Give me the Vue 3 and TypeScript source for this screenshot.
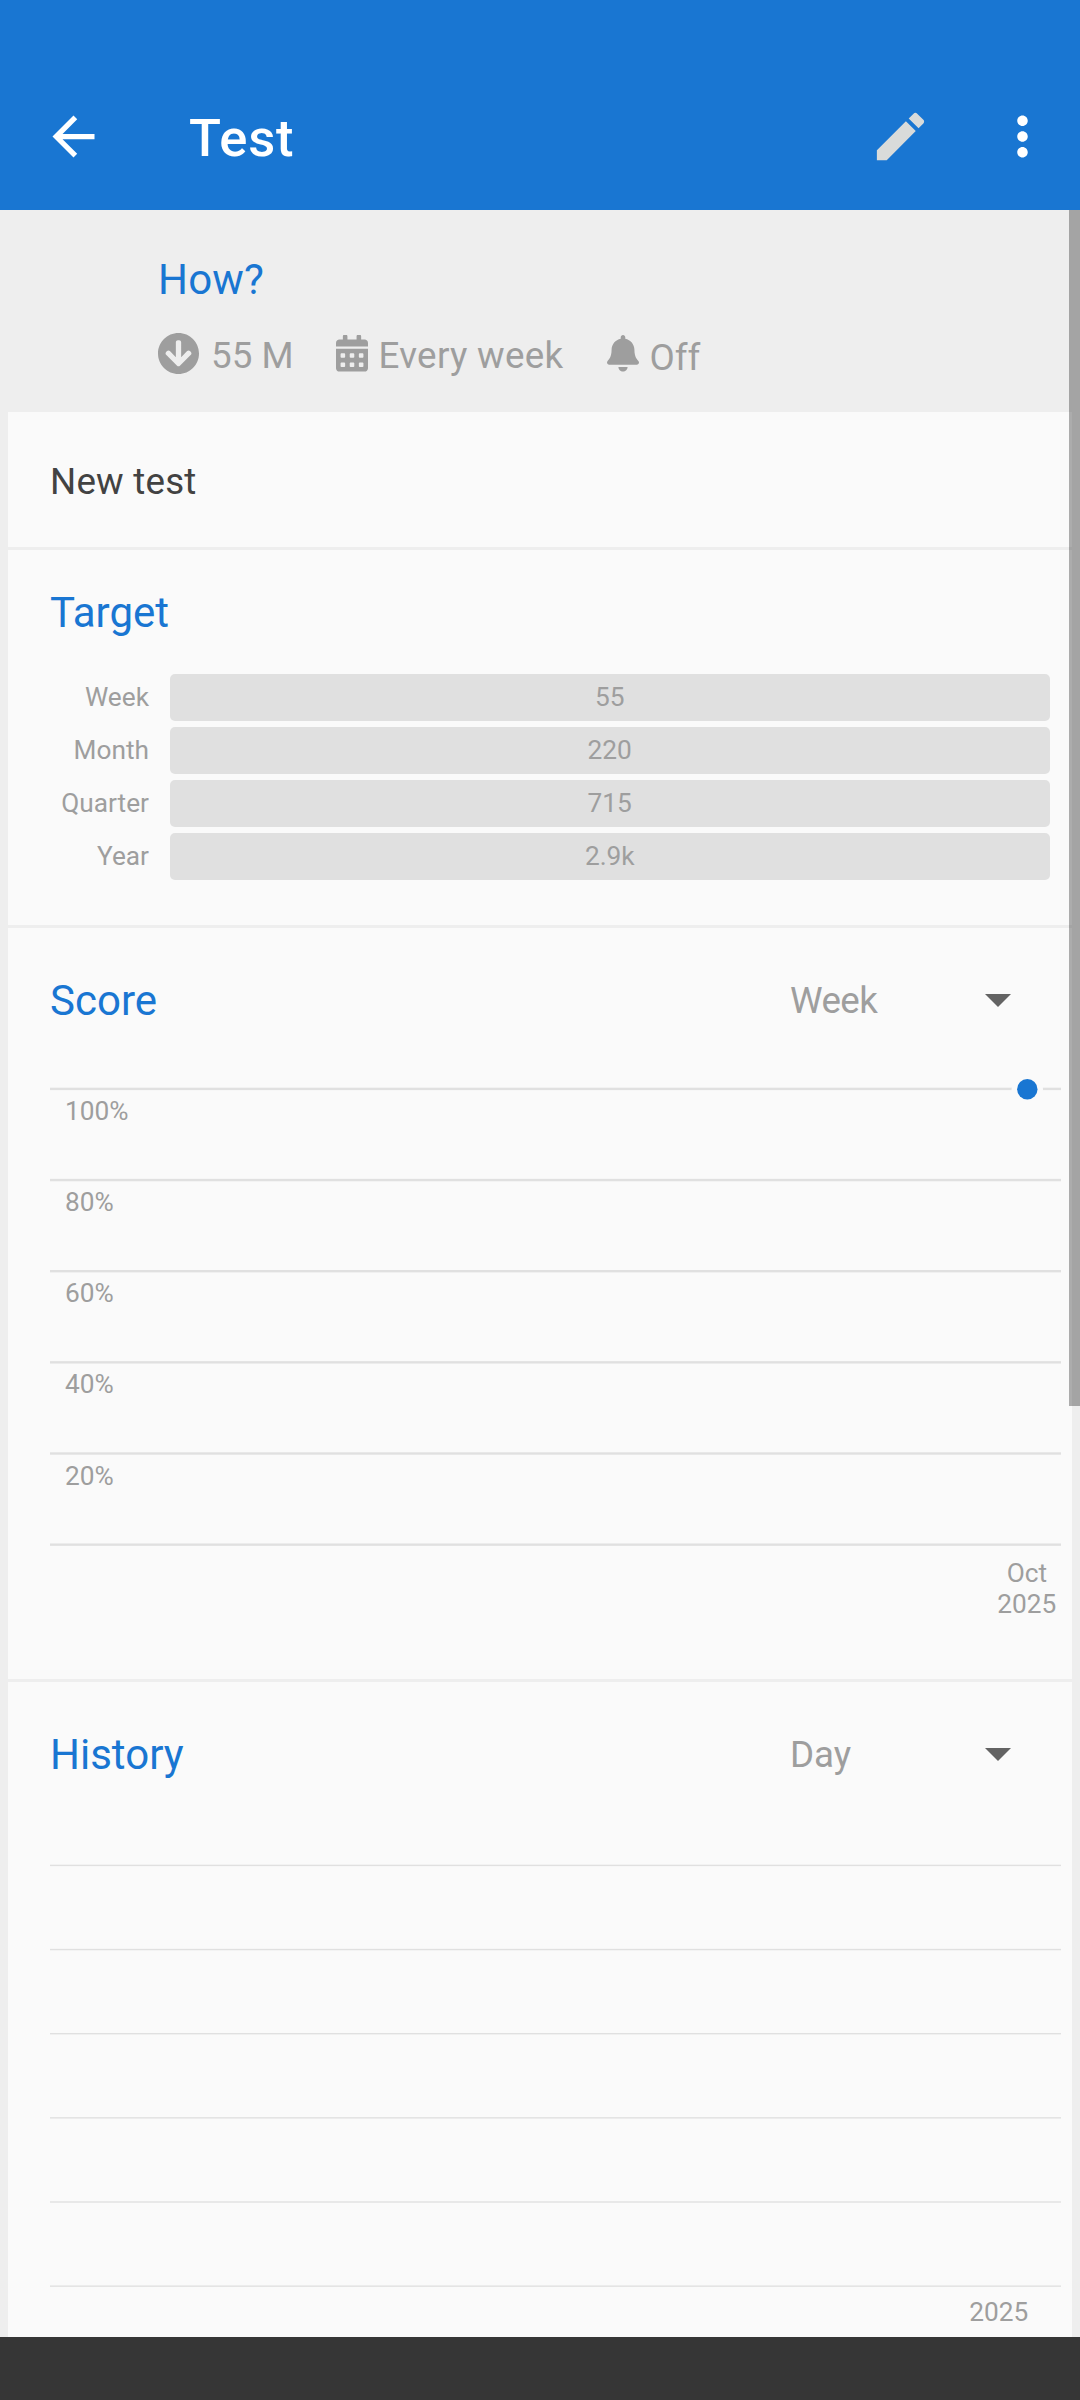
<script setup lang="ts">
interface TargetRow {
  label: string
  value: string
}

const targets: TargetRow[] = [
  { label: 'Week', value: '55' },
  { label: 'Month', value: '220' },
  { label: 'Quarter', value: '715' },
  { label: 'Year', value: '2.9k' },
]

const scoreLabels: string[] = ['100%', '80%', '60%', '40%', '20%', '']
const scoreStep = 91.15
const historyLines: number[] = [0, 1, 2, 3, 4, 5]
const historyStep = 84.15
</script>

<template>
  <div class="screen">
    <header class="app-bar">
      <svg class="icon back" viewBox="0 0 24 24" fill="#fff">
        <path d="M20 11H7.83l5.59-5.59L12 4l-8 8 8 8 1.41-1.41L7.83 13H20v-2z" />
      </svg>
      <h1 class="title">Test</h1>
      <svg class="icon edit" viewBox="0 0 24 24" fill="#d9dbda">
        <path d="M3 17.25V21h3.75L17.81 9.94l-3.75-3.75L3 17.25zM20.71 7.04c.39-.39.39-1.02 0-1.41l-2.34-2.34c-.39-.39-1.02-.39-1.41 0l-1.83 1.83 3.75 3.75 1.83-1.83z" />
      </svg>
      <svg class="icon more" viewBox="0 0 24 24" fill="#fff">
        <path d="M12 8c1.1 0 2-.9 2-2s-.9-2-2-2-2 .9-2 2 .9 2 2 2zm0 2c-1.1 0-2 .9-2 2s.9 2 2 2 2-.9 2-2-.9-2-2-2zm0 6c-1.1 0-2 .9-2 2s.9 2 2 2 2-.9 2-2-.9-2-2-2z" />
      </svg>
    </header>

    <main class="content">
      <section class="summary">
        <h2 class="question">How?</h2>
        <div class="facts">
          <svg class="fact-goal" viewBox="8 8 496 496" fill="#9e9e9e">
            <path d="M504 256c0 137-111 248-248 248S8 393 8 256 119 8 256 8s248 111 248 248zm-143.6-28.9L288 302.6V120c0-13.3-10.7-24-24-24h-16c-13.3 0-24 10.7-24 24v182.6l-72.4-75.5c-9.3-9.7-24.8-9.9-34.3-.4l-10.9 11c-9.4 9.4-9.4 24.6 0 33.9L239 404.3c9.4 9.4 24.6 9.4 33.9 0l132.7-132.7c9.4-9.4 9.4-24.6 0-33.9l-10.9-11c-9.5-9.5-25-9.3-34.3.4z" />
          </svg>
          <span class="fact goal">55 M</span>
          <svg class="fact-icon" viewBox="0 0 448 512" fill="#9e9e9e">
            <path d="M0 464c0 26.5 21.5 48 48 48h352c26.5 0 48-21.5 48-48V192H0v272zm320-196c0-6.6 5.4-12 12-12h40c6.6 0 12 5.4 12 12v40c0 6.6-5.4 12-12 12h-40c-6.6 0-12-5.4-12-12v-40zm0 128c0-6.6 5.4-12 12-12h40c6.6 0 12 5.4 12 12v40c0 6.6-5.4 12-12 12h-40c-6.6 0-12-5.4-12-12v-40zM192 268c0-6.6 5.4-12 12-12h40c6.6 0 12 5.4 12 12v40c0 6.6-5.4 12-12 12h-40c-6.6 0-12-5.4-12-12v-40zm0 128c0-6.6 5.4-12 12-12h40c6.6 0 12 5.4 12 12v40c0 6.6-5.4 12-12 12h-40c-6.6 0-12-5.4-12-12v-40zM64 268c0-6.6 5.4-12 12-12h40c6.6 0 12 5.4 12 12v40c0 6.6-5.4 12-12 12H76c-6.6 0-12-5.4-12-12v-40zm0 128c0-6.6 5.4-12 12-12h40c6.6 0 12 5.4 12 12v40c0 6.6-5.4 12-12 12H76c-6.6 0-12-5.4-12-12v-40zM400 64h-48V16c0-8.8-7.2-16-16-16h-32c-8.8 0-16 7.2-16 16v48H160V16c0-8.8-7.2-16-16-16h-32c-8.8 0-16 7.2-16 16v48H48C21.5 64 0 85.5 0 112v48h448v-48c0-26.5-21.5-48-48-48z" />
          </svg>
          <span class="fact frequency">Every week</span>
          <svg class="fact-icon" viewBox="0 0 448 512" fill="#9e9e9e">
            <path d="M224 512c35.32 0 63.97-28.65 63.97-64H160.03c0 35.35 28.65 64 63.97 64zm215.39-149.71c-19.32-20.76-55.47-51.99-55.47-154.29 0-77.7-54.48-139.9-127.94-155.16V32c0-17.67-14.32-32-31.98-32s-31.98 14.33-31.98 32v20.84C118.56 68.1 64.08 130.3 64.08 208c0 102.3-36.15 133.53-55.47 154.29-6 6.45-8.66 14.16-8.61 21.71.11 16.4 12.98 32 32.1 32h383.8c19.12 0 32-15.6 32.1-32 .05-7.55-2.61-15.27-8.61-21.71z" />
          </svg>
          <span class="fact reminder">Off</span>
        </div>
      </section>

      <section class="card note">New test</section>

      <section class="card target">
        <h2 class="card-title">Target</h2>
        <div class="rows">
          <div v-for="row in targets" :key="row.label" class="row">
            <span class="row-label">{{ row.label }}</span>
            <span class="row-bar">{{ row.value }}</span>
          </div>
        </div>
      </section>

      <section class="card score">
        <div class="card-head">
          <h2 class="card-title">Score</h2>
          <span class="select">Week</span>
          <svg class="caret" viewBox="0 0 26 13" fill="#636363"><path d="M0 0h26L13 13z" /></svg>
        </div>
        <svg class="chart" width="1064" height="600" viewBox="0 0 1064 600">
          <g v-for="(label, i) in scoreLabels" :key="i">
            <rect x="42" :y="9.7 + i * scoreStep" width="1011" height="2.4" fill="#e0e0e0" />
            <text x="57" :y="42 + i * scoreStep">{{ label }}</text>
          </g>
          <circle cx="1019.3" cy="11.3" r="15.7" fill="#fafafa" />
          <circle cx="1019.3" cy="11.3" r="10.2" fill="#1976d2" />
          <text x="1019" y="503.7" text-anchor="middle">Oct</text>
          <text x="1018.7" y="535" text-anchor="middle">2025</text>
        </svg>
      </section>

      <section class="card history">
        <div class="card-head">
          <h2 class="card-title">History</h2>
          <span class="select">Day</span>
          <svg class="caret" viewBox="0 0 26 13" fill="#636363"><path d="M0 0h26L13 13z" /></svg>
        </div>
        <svg class="chart" width="1064" height="505" viewBox="0 0 1064 505">
          <rect
            v-for="i in historyLines"
            :key="i"
            x="42"
            :y="32.7 + i * historyStep"
            width="1011"
            height="1.4"
            fill="#e0e0e0"
          />
          <text x="990.8" y="489" text-anchor="middle">2025</text>
        </svg>
      </section>

      <div class="scrollbar"></div>
    </main>

    <footer class="nav-bar"></footer>
  </div>
</template>

<style>
body {
  margin: 0;
}
</style>

<style scoped>
.screen {
  width: 1080px;
  height: 2400px;
  display: flex;
  flex-direction: column;
  overflow: hidden;
  background: #eee;
  font-family: Roboto, "Liberation Sans", sans-serif;
  color: #9e9e9e;
}
h1,
h2 {
  margin: 0;
  font-weight: 400;
}
svg {
  display: block;
  flex: none;
}
.app-bar {
  box-sizing: border-box;
  height: 210px;
  padding: 63px 26px 0 42px;
  display: flex;
  align-items: center;
  background: #1976d2;
  flex: none;
}
.icon {
  width: 63px;
  height: 63px;
}
.title {
  margin-left: 84px;
  flex: 1;
  padding-top: 3px;
  color: #fff;
  font-size: 52.5px;
  line-height: 62px;
  font-weight: 500;
  letter-spacing: 0.8px;
}
.edit {
  margin-right: 59px;
}
.content {
  position: relative;
  flex: 1;
  min-height: 0;
  display: flex;
  flex-direction: column;
  gap: 3px;
}
.summary {
  box-sizing: border-box;
  height: 202px;
  margin-bottom: -3px;
  padding: 45px 0 0 157.5px;
  flex: none;
}
.question {
  padding-left: 0.5px;
  color: #1976d2;
  font-size: 42px;
  line-height: 49px;
  letter-spacing: 0.2px;
}
.facts {
  display: flex;
  align-items: center;
  height: 48px;
  margin-top: 25px;
  padding-left: 0.5px;
}
.fact {
  font-size: 36.75px;
  line-height: 44px;
  padding-top: 5px;
  white-space: nowrap;
}
.fact-goal {
  width: 41px;
  height: 41px;
}
.fact-icon {
  width: 32px;
  height: 36.6px;
  margin-top: 1px;
}
.goal {
  width: 124.5px;
  margin-left: 12px;
}
.frequency {
  width: 228px;
  margin-left: 11px;
  letter-spacing: 0.3px;
}
.reminder {
  margin-left: 11px;
  padding-top: 9px;
}
.card {
  box-sizing: border-box;
  margin: 0 8px;
  background: #fafafa;
  flex: none;
}
.note {
  height: 135px;
  padding: 47px 42px 0;
  color: #424242;
  font-size: 36.75px;
  line-height: 46px;
  letter-spacing: 0.2px;
}
.card-title {
  color: #1976d2;
  font-size: 42px;
  line-height: 50px;
}
.target {
  height: 375px;
  padding: 38px 22px 0 42px;
}
.rows {
  display: flex;
  flex-direction: column;
  gap: 6px;
  margin-top: 36px;
}
.row {
  display: flex;
  height: 47px;
  align-items: center;
  font-size: 26.25px;
  line-height: 47px;
}
.row-label {
  width: 99px;
  text-align: right;
}
.row-bar {
  margin-left: 20.5px;
  flex: 1;
  height: 47px;
  border-radius: 5px;
  background: #e0e0e0;
  text-align: center;
}
.score {
  height: 751px;
}
.history {
  height: 655px;
}
.card-head {
  box-sizing: border-box;
  height: 150px;
  padding-left: 42px;
  display: flex;
  align-items: center;
}
.card-head .card-title {
  width: 740px;
  padding-bottom: 4px;
}
.select {
  width: 194px;
  font-size: 36.75px;
  line-height: 44px;
  padding-bottom: 5px;
}
.score .select {
  letter-spacing: -0.6px;
}
.caret {
  width: 26px;
  height: 13px;
  margin-left: 1px;
  margin-bottom: 5px;
}
.chart text {
  font-size: 26.25px;
  fill: #9e9e9e;
}
.scrollbar {
  position: absolute;
  top: 0;
  right: 0;
  width: 11px;
  height: 1196px;
  background: rgba(0, 0, 0, 0.31);
}
.nav-bar {
  height: 63px;
  background: #363636;
  flex: none;
}
</style>
